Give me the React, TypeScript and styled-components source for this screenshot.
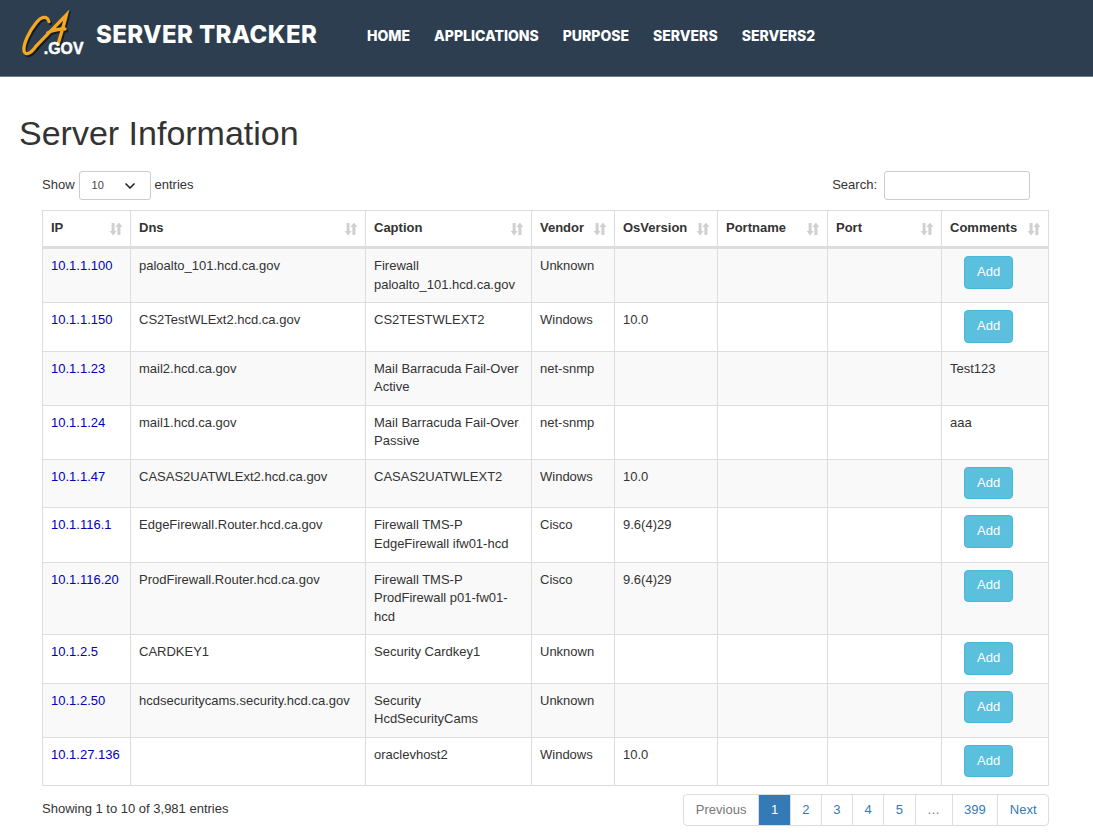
import React from 'react'
import styled, { createGlobalStyle } from 'styled-components'
import { ChevronDown } from 'lucide-react'

const GlobalStyle = createGlobalStyle`
  html, body {
    margin: 0;
    padding: 0;
    background: #fff;
    font-family: "Liberation Sans", Arial, sans-serif;
    font-size: 13px;
    line-height: 1.42857;
    color: #333;
  }
  * {
    box-sizing: border-box;
  }
`

const Header = styled.header`
  height: 77px;
  background: #2c3e50;
  border-bottom: 1px solid #6f7c88;
  display: flex;
  align-items: center;
  padding: 0 0 5px 20px;
`

const Brand = styled.a`
  display: flex;
  align-items: center;
  gap: 10px;
  width: 347px;
  font-family: Inter, "Open Sans", sans-serif;
  font-size: 24px;
  font-weight: 800;
  letter-spacing: 0.4px;
  color: #fff;
  white-space: nowrap;
`

const Nav = styled.nav`
  display: flex;
  gap: 24px;
`

const NavLink = styled.a`
  font-family: Inter, "Open Sans", sans-serif;
  font-size: 14px;
  font-weight: 800;
  color: #fff;
  white-space: nowrap;
`

const Title = styled.h1`
  margin: 0;
  padding: 36px 0 0 19px;
  font-size: 34px;
  font-weight: 400;
  line-height: 40px;
  color: #333;
`

const Wrapper = styled.div`
  padding: 18px 44px 0 42px;
`

const Controls = styled.div`
  display: flex;
  justify-content: space-between;
  align-items: center;
  height: 29px;
  padding-right: 19px;
  margin-bottom: 10px;
`

const ControlGroup = styled.label`
  display: flex;
  align-items: center;
  gap: 4px;
`

const SelectBox = styled.div`
  width: 72px;
  height: 29px;
  border: 1px solid #ccc;
  border-radius: 3px;
  display: flex;
  align-items: center;
  justify-content: space-between;
  padding: 0 12px;
  font-size: 11px;
  color: #444;
`

const SearchInput = styled.input`
  width: 146px;
  height: 29px;
  margin-left: 3px;
  border: 1px solid #ccc;
  border-radius: 3px;
  outline: none;
`

const Table = styled.table`
  width: 1006px;
  table-layout: fixed;
  border-collapse: collapse;
  border: 1px solid #ddd;
`

const HeadCell = styled.th`
  position: relative;
  height: 37px;
  padding: 8px;
  border: 1px solid #ddd;
  border-bottom: 3px solid #ddd;
  text-align: left;
  font-weight: 700;
`

const SortIcon = styled.svg`
  position: absolute;
  right: 7px;
  top: 11px;
`

const Row = styled.tr<{ $odd: boolean }>`
  background: ${p => (p.$odd ? '#f9f9f9' : '#fff')};
`

const Cell = styled.td`
  padding: 8px;
  border: 1px solid #ddd;
  vertical-align: top;
  color: #333;
`

const IpLink = styled.a`
  color: #0000b8;
`

const AddButton = styled.button`
  display: block;
  height: 32.5px;
  margin: -1px 0 0 14px;
  font-family: inherit;
  font-size: 13px;
  line-height: 1.42857;
  padding: 0 12px;
  color: #fff;
  background: #5bc0de;
  border: 1px solid #46b8da;
  border-radius: 4px;
`

const Footer = styled.div`
  display: flex;
  justify-content: space-between;
  align-items: flex-start;
  margin-top: 8px;
`

const Info = styled.div`
  padding-top: 6px;
`

const Pagination = styled.div`
  display: flex;
  height: 32px;
  border: 1px solid #ddd;
  border-radius: 4px;
`

const PageItem = styled.a<{ $active?: boolean; $muted?: boolean }>`
  display: flex;
  align-items: center;
  justify-content: center;
  padding: 0 11.5px;
  font-size: 13px;
  border-left: 1px solid #ddd;
  background: ${p => (p.$active ? '#337ab7' : 'transparent')};
  color: ${p => (p.$active ? '#fff' : p.$muted ? '#777' : '#337ab7')};
  &:first-child {
    border-left: none;
    padding: 0 12px;
  }
`

const letterC = 'M102 50 C97 32 80 32 63 54 C42 80 24 118 27 137 C30 153 46 147 62 125'
const letterA = 'M62 125 C85 100 125 60 154 30 C147 60 137 90 129 118 M98 84 C115 73 135 72 150 72'

function Logo() {
  return (
    <svg width="66" height="54" viewBox="15 12 198 162">
      <g fill="none" stroke="#000" strokeOpacity=".55" strokeWidth="11" strokeLinecap="round" transform="translate(4 5)">
        <path d={letterC} />
        <path d={letterA} />
      </g>
      <g fill="none" stroke="#f5a623" strokeWidth="10" strokeLinecap="round">
        <path d={letterC} />
        <path d={letterA} />
      </g>
      <text
        x="86"
        y="146"
        fill="#fff"
        stroke="#fff"
        strokeWidth="1.5"
        fontFamily="Liberation Sans, sans-serif"
        fontSize="49"
        textLength="120"
        lengthAdjust="spacingAndGlyphs"
      >
        .GOV
      </text>
    </svg>
  )
}

function SortGlyph() {
  return (
    <SortIcon width="14" height="14" viewBox="0 0 14 14" fill="#d0d0d0">
      <path d="M2.6 1h3v8h2L4.1 13.5 0.6 9h2z" />
      <path d="M8.4 13V5h-2L9.9 0.5 13.4 5h-2v8z" />
    </SortIcon>
  )
}

type Server = {
  ip: string
  dns: string
  caption: string[]
  vendor: string
  os: string
  comment?: string
}

const columns: [string, number][] = [
  ['IP', 88],
  ['Dns', 235],
  ['Caption', 166],
  ['Vendor', 83],
  ['OsVersion', 103],
  ['Portname', 110],
  ['Port', 114],
  ['Comments', 107]
]

const servers: Server[] = [
  { ip: '10.1.1.100', dns: 'paloalto_101.hcd.ca.gov', caption: ['Firewall', 'paloalto_101.hcd.ca.gov'], vendor: 'Unknown', os: '' },
  { ip: '10.1.1.150', dns: 'CS2TestWLExt2.hcd.ca.gov', caption: ['CS2TESTWLEXT2'], vendor: 'Windows', os: '10.0' },
  { ip: '10.1.1.23', dns: 'mail2.hcd.ca.gov', caption: ['Mail Barracuda Fail-Over', 'Active'], vendor: 'net-snmp', os: '', comment: 'Test123' },
  { ip: '10.1.1.24', dns: 'mail1.hcd.ca.gov', caption: ['Mail Barracuda Fail-Over', 'Passive'], vendor: 'net-snmp', os: '', comment: 'aaa' },
  { ip: '10.1.1.47', dns: 'CASAS2UATWLExt2.hcd.ca.gov', caption: ['CASAS2UATWLEXT2'], vendor: 'Windows', os: '10.0' },
  { ip: '10.1.116.1', dns: 'EdgeFirewall.Router.hcd.ca.gov', caption: ['Firewall TMS-P', 'EdgeFirewall ifw01-hcd'], vendor: 'Cisco', os: '9.6(4)29' },
  { ip: '10.1.116.20', dns: 'ProdFirewall.Router.hcd.ca.gov', caption: ['Firewall TMS-P', 'ProdFirewall p01-fw01-', 'hcd'], vendor: 'Cisco', os: '9.6(4)29' },
  { ip: '10.1.2.5', dns: 'CARDKEY1', caption: ['Security Cardkey1'], vendor: 'Unknown', os: '' },
  { ip: '10.1.2.50', dns: 'hcdsecuritycams.security.hcd.ca.gov', caption: ['Security', 'HcdSecurityCams'], vendor: 'Unknown', os: '' },
  { ip: '10.1.27.136', dns: '', caption: ['oraclevhost2'], vendor: 'Windows', os: '10.0' }
]

const navItems = ['HOME', 'APPLICATIONS', 'PURPOSE', 'SERVERS', 'SERVERS2']

export default function App() {
  return (
    <>
      <GlobalStyle />
      <Header>
        <Brand>
          <Logo />
          SERVER TRACKER
        </Brand>
        <Nav>
          {navItems.map(item => (
            <NavLink key={item}>{item}</NavLink>
          ))}
        </Nav>
      </Header>
      <Title>Server Information</Title>
      <Wrapper>
        <Controls>
          <ControlGroup>
            Show
            <SelectBox>
              10
              <ChevronDown size={16} strokeWidth={2.5} color="#222" />
            </SelectBox>
            entries
          </ControlGroup>
          <ControlGroup>
            Search:
            <SearchInput />
          </ControlGroup>
        </Controls>
        <Table>
          <colgroup>
            {columns.map(([name, width]) => (
              <col key={name} width={width} />
            ))}
          </colgroup>
          <thead>
            <tr>
              {columns.map(([name]) => (
                <HeadCell key={name}>
                  {name}
                  <SortGlyph />
                </HeadCell>
              ))}
            </tr>
          </thead>
          <tbody>
            {servers.map((s, i) => (
              <Row key={s.ip} $odd={i % 2 === 0}>
                <Cell>
                  <IpLink>{s.ip}</IpLink>
                </Cell>
                <Cell>{s.dns}</Cell>
                <Cell>
                  {s.caption.map((line, n) => (
                    <div key={n}>{line}</div>
                  ))}
                </Cell>
                <Cell>{s.vendor}</Cell>
                <Cell>{s.os}</Cell>
                <Cell />
                <Cell />
                <Cell>{s.comment ?? <AddButton>Add</AddButton>}</Cell>
              </Row>
            ))}
          </tbody>
        </Table>
        <Footer>
          <Info>Showing 1 to 10 of 3,981 entries</Info>
          <Pagination>
            <PageItem $muted>Previous</PageItem>
            <PageItem $active>1</PageItem>
            <PageItem>2</PageItem>
            <PageItem>3</PageItem>
            <PageItem>4</PageItem>
            <PageItem>5</PageItem>
            <PageItem $muted>…</PageItem>
            <PageItem>399</PageItem>
            <PageItem>Next</PageItem>
          </Pagination>
        </Footer>
      </Wrapper>
    </>
  )
}
